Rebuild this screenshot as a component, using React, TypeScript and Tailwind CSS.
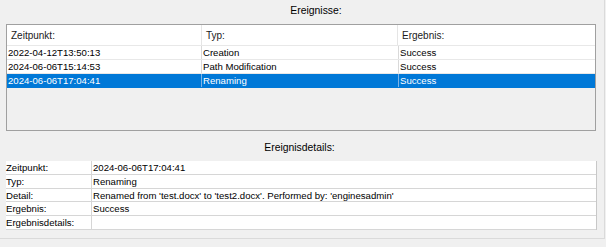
// Ereignis-Ansicht: Liste der Ereignisse oben, Details des gewählten Eintrags unten.

const events = [
  { time: '2022-04-12T13:50:13', type: 'Creation', result: 'Success' },
  { time: '2024-06-06T15:14:53', type: 'Path Modification', result: 'Success' },
  { time: '2024-06-06T17:04:41', type: 'Renaming', result: 'Success' },
]

const selected = 2

const details: { label: string; value: string; h: string }[] = [
  { label: 'Zeitpunkt:', value: '2024-06-06T17:04:41', h: 'h-[14px]' },
  { label: 'Typ:', value: 'Renaming', h: 'h-[14px]' },
  {
    label: 'Detail:',
    value: "Renamed from 'test.docx' to 'test2.docx'. Performed by: 'enginesadmin'",
    h: 'h-[13px]',
  },
  { label: 'Ergebnis:', value: 'Success', h: 'h-[14px]' },
  { label: 'Ergebnisdetails:', value: '', h: 'h-[14px]' },
]

export default function App() {
  return (
    <div
      className="w-[606px] h-[247px] bg-[#f0f0f0] text-[9.6px] leading-[13px] text-black"
      style={{ fontFamily: '"Liberation Sans", Arial, sans-serif' }}
    >
      <div className="w-[605px] h-[239px] border-r border-b border-[#dadada] px-[6px]">
        {/* Titel Liste */}
        <div className="h-[24px] flex items-center justify-center pl-[28px] pb-[4px] text-[10.4px]">
          Ereignisse:
        </div>

        {/* Ereignisliste */}
        <div className="w-[590px] h-[107px] border border-[#a0a0a0] bg-[#f0f0f0]">
          <div className="flex h-[21px] bg-white border-b border-[#e8e8e8] text-[10px]">
            <div className="w-[195px] flex items-center pl-[4px] border-r border-[#e5e5e5] text-[#1a1a1a]">
              Zeitpunkt:
            </div>
            <div className="w-[196px] flex items-center pl-[4px] border-r border-[#e5e5e5] text-[#1a1a1a]">
              Typ:
            </div>
            <div className="flex-1 flex items-center pl-[4px] text-[#1a1a1a]">Ergebnis:</div>
          </div>
          {events.map((e, i) => {
            const sel = i === selected
            return (
              <div
                key={e.time}
                className={
                  sel
                    ? 'flex h-[14px] bg-[#0078d7] text-white border-b border-[#0078d7]'
                    : 'flex h-[14px] bg-white border-b border-[#e8e8e8]'
                }
              >
                <div
                  className={
                    sel
                      ? 'w-[195px] pl-[1px] border-r border-[#7fb3e6]'
                      : 'w-[195px] pl-[1px] border-r border-[#d9d9d9]'
                  }
                >
                  {e.time}
                </div>
                <div
                  className={
                    sel
                      ? 'w-[197px] pl-[1px] border-r border-[#7fb3e6]'
                      : 'w-[197px] pl-[1px] border-r border-[#d9d9d9]'
                  }
                >
                  {e.type}
                </div>
                <div className="flex-1 pl-[1px]">{e.result}</div>
              </div>
            )
          })}
        </div>

        {/* Titel Details */}
        <div className="h-[30px] flex items-center justify-center pr-[5px] pt-[3px] text-[10.4px]">
          Ereignisdetails:
        </div>

        {/* Detailtabelle */}
        <div className="w-[591px] border-r border-[#c8c8c8]">
          {details.map((d) => (
            <div key={d.label} className={`flex ${d.h} bg-white border-b border-[#d6d6d6]`}>
              <div className="w-[86px] border-r border-[#d6d6d6] flex items-center">{d.label}</div>
              <div className="flex-1 pl-[1px] flex items-center whitespace-nowrap">{d.value}</div>
            </div>
          ))}
        </div>
      </div>
    </div>
  )
}
